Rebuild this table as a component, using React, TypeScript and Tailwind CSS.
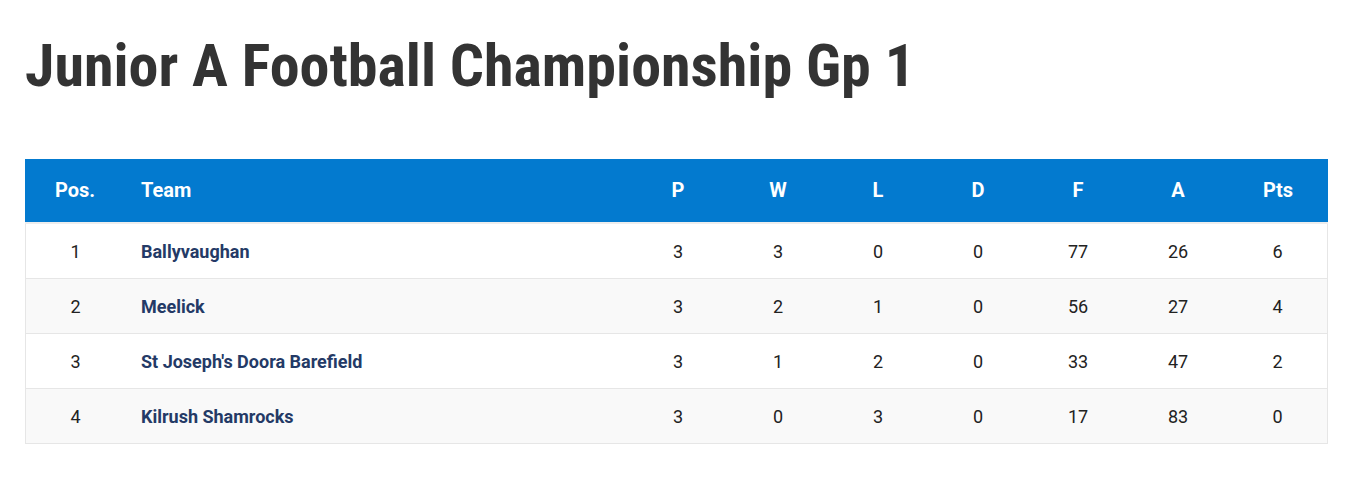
import React from "react";

const rows = [
  { pos: 1, team: "Ballyvaughan", p: 3, w: 3, l: 0, d: 0, f: 77, a: 26, pts: 6 },
  { pos: 2, team: "Meelick", p: 3, w: 2, l: 1, d: 0, f: 56, a: 27, pts: 4 },
  { pos: 3, team: "St Joseph's Doora Barefield", p: 3, w: 1, l: 2, d: 0, f: 33, a: 47, pts: 2 },
  { pos: 4, team: "Kilrush Shamrocks", p: 3, w: 0, l: 3, d: 0, f: 17, a: 83, pts: 0 },
];

const heads = ["P", "W", "L", "D", "F", "A", "Pts"];

export default function App() {
  return (
    <div className="bg-white min-h-[482px] px-[25px] pt-[30px] pb-10" style={{ fontFamily: "Roboto, 'Liberation Sans', sans-serif" }}>
      <h1 className="text-[60px] leading-[72px] font-bold text-[#333333]" style={{ fontFamily: "'Roboto Condensed', 'Liberation Sans Narrow', Roboto, sans-serif" }}>
        Junior A Football Championship Gp 1
      </h1>
      <table className="mt-[57px] w-[1303px] border-separate border-spacing-0 table-fixed">
        <colgroup>
          <col className="w-[100px]" />
          <col />
          <col className="w-[100px]" />
          <col className="w-[100px]" />
          <col className="w-[100px]" />
          <col className="w-[100px]" />
          <col className="w-[100px]" />
          <col className="w-[100px]" />
          <col className="w-[100px]" />
        </colgroup>
        <thead>
          <tr className="bg-[#037acf] text-white text-[20px]">
            <th className="h-[65px] text-center font-bold border-b-2 border-[#ededed] pb-[2px]">Pos.</th>
            <th className="h-[65px] text-left pl-[16px] font-bold border-b-2 border-[#ededed] pb-[2px]">Team</th>
            {heads.map((h) => (
              <th key={h} className="h-[65px] text-center font-bold border-b-2 border-[#ededed] pb-[2px]">{h}</th>
            ))}
          </tr>
        </thead>
        <tbody>
          {rows.map((r, i) => {
            const bg = i % 2 === 1 ? "bg-[#f9f9f9]" : "bg-white";
            const vals = [r.p, r.w, r.l, r.d, r.f, r.a, r.pts];
            return (
              <tr key={r.pos} className={`text-[18px] text-[#222222] ${bg}`}>
                <td className="h-[55px] text-center border-b border-l border-[#e6e6e6]">{r.pos}</td>
                <td className="h-[55px] text-left pl-[16px] font-bold text-[#243a66] border-b border-[#e6e6e6]">{r.team}</td>
                {vals.map((v, j) => (
                  <td key={j} className={`h-[55px] text-center border-b border-[#e6e6e6] ${j === 6 ? "border-r" : ""}`}>{v}</td>
                ))}
              </tr>
            );
          })}
        </tbody>
      </table>
    </div>
  );
}
